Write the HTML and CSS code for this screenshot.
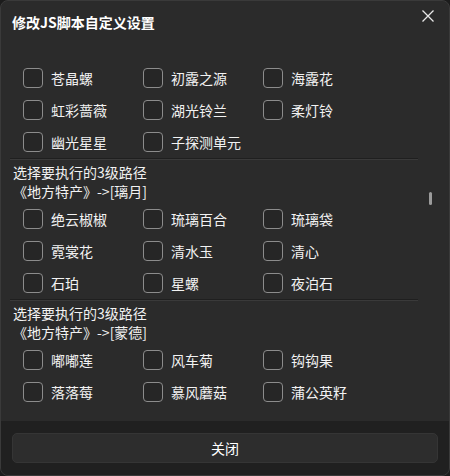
FILE: index.html
```html
<!DOCTYPE html>
<html lang="zh-CN">
<head>
  <meta charset="UTF-8">
  <title>修改JS脚本自定义设置</title>
  <link rel="stylesheet" href="styles.css">
</head>
<body>

  <div class="dialog">
    <div class="dialog-header">
      <h2>修改JS脚本自定义设置</h2>
      <span class="close-btn">
        <svg width="14" height="14" viewBox="0 0 14 14"><path d="M1.5 1.5 L12.5 12.5 M12.5 1.5 L1.5 12.5" stroke="#e8e8e8" stroke-width="1.3" fill="none"/></svg>
      </span>
    </div>

    <div class="dialog-content">
      <div class="options top">
        <label class="option"><span class="box"></span>苍晶螺</label>
        <label class="option"><span class="box"></span>初露之源</label>
        <label class="option"><span class="box"></span>海露花</label>
        <label class="option"><span class="box"></span>虹彩蔷薇</label>
        <label class="option"><span class="box"></span>湖光铃兰</label>
        <label class="option"><span class="box"></span>柔灯铃</label>
        <label class="option"><span class="box"></span>幽光星星</label>
        <label class="option"><span class="box"></span>子探测单元</label>
      </div>

      <div class="sep"></div>
      <div class="section-title">
        <div>选择要执行的3级路径</div>
        <div>《地方特产》->[璃月]</div>
      </div>
      <div class="options">
        <label class="option"><span class="box"></span>绝云椒椒</label>
        <label class="option"><span class="box"></span>琉璃百合</label>
        <label class="option"><span class="box"></span>琉璃袋</label>
        <label class="option"><span class="box"></span>霓裳花</label>
        <label class="option"><span class="box"></span>清水玉</label>
        <label class="option"><span class="box"></span>清心</label>
        <label class="option"><span class="box"></span>石珀</label>
        <label class="option"><span class="box"></span>星螺</label>
        <label class="option"><span class="box"></span>夜泊石</label>
      </div>

      <div class="sep"></div>
      <div class="section-title">
        <div>选择要执行的3级路径</div>
        <div>《地方特产》->[蒙德]</div>
      </div>
      <div class="options">
        <label class="option"><span class="box"></span>嘟嘟莲</label>
        <label class="option"><span class="box"></span>风车菊</label>
        <label class="option"><span class="box"></span>钩钩果</label>
        <label class="option"><span class="box"></span>落落莓</label>
        <label class="option"><span class="box"></span>慕风蘑菇</label>
        <label class="option"><span class="box"></span>蒲公英籽</label>
      </div>

      <div class="scroll-thumb"></div>
    </div>

    <div class="dialog-footer">
      <button class="close-button">关闭</button>
    </div>
  </div>

</body>
</html>
```

FILE: styles.css
```css
body {
  margin: 0;
  background-color: #1c1c1c;
  font-family: "Noto Sans CJK SC", "Noto Sans", sans-serif;
  color: #ffffff;
}

.dialog {
  width: 450px;
  height: 476px;
  box-sizing: border-box;
  background-color: #2b2b2b;
  border: 1px solid #3a3a3a;
  border-radius: 8px;
  display: flex;
  flex-direction: column;
  overflow: hidden;
}

.dialog-header {
  height: 43px;
  display: flex;
  align-items: center;
  justify-content: space-between;
  padding: 0 14px 0 11px;
}

.dialog-header h2 {
  margin: 0;
  font-size: 14px;
  font-weight: bold;
  line-height: 1;
  margin-top: -2px;
}

.close-btn {
  display: flex;
  margin-top: -14px;
}

.dialog-content {
  flex: 1;
  position: relative;
  padding: 18px 31px 0 9px;
  overflow: hidden;
}

.options {
  display: grid;
  grid-template-columns: repeat(3, 120px);
  padding-left: 13px;
  margin-top: 2px;
}

.options.top {
  margin-top: 0;
}

.option {
  height: 32px;
  display: flex;
  align-items: center;
  gap: 8px;
  font-size: 14px;
  line-height: 1;
  color: #f2f2f2;
}

.box {
  width: 18px;
  height: 18px;
  border: 1px solid #8c8c8c;
  border-radius: 4px;
  background-color: #262626;
}

.sep {
  height: 1px;
  background-color: #1f1f1f;
  border-bottom: 1px solid #3a3a3a;
  margin-top: 0;
}

.options + .sep {
  margin-top: 0;
}

.section-title {
  padding: 3px 0 0 3px;
  font-size: 14px;
  line-height: 19px;
  color: #f2f2f2;
}

.scroll-thumb {
  position: absolute;
  right: 17px;
  top: 148px;
  width: 3px;
  height: 13px;
  border-radius: 2px;
  background-color: #9b9b9b;
}

.dialog-footer {
  background-color: #202020;
  padding: 12px 11px 12px 11px;
}

.close-button {
  width: 100%;
  height: 30px;
  background-color: #2d2d2d;
  border: 1px solid #353535;
  border-radius: 5px;
  color: #ffffff;
  font-family: "Noto Sans CJK SC", sans-serif;
  font-size: 14px;
  cursor: pointer;
}

.close-button:hover {
  background-color: #333333;
}
```
